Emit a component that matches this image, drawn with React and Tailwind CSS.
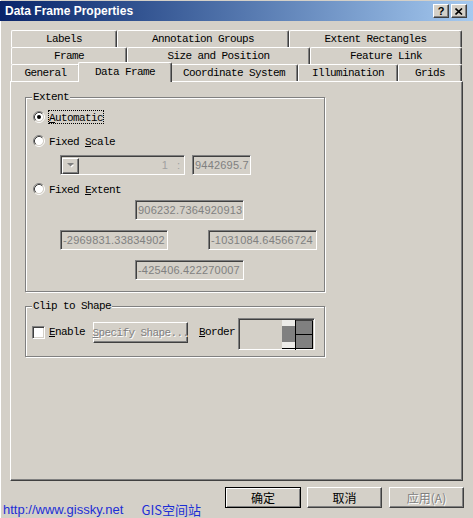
import React from "react";

const monoBase = "font-['Liberation_Mono',monospace] text-[11px] tracking-[-0.6px] leading-[14px]";
const mono = `${monoBase} text-black`;
const sans = "font-['Liberation_Sans',Arial,sans-serif]";
const cjk = "font-['Noto_Sans_CJK_SC','Liberation_Sans',sans-serif]";

const sunken =
  "border border-t-[#808080] border-l-[#808080] border-b-white border-r-white shadow-[inset_1px_1px_0_#404040,inset_-1px_-1px_0_#d4d0c8]";
const raised =
  "border border-t-white border-l-white border-b-[#404040] border-r-[#404040] shadow-[inset_-1px_-1px_0_#808080] bg-[#d4d0c8]";
const etched = "border border-[#808080] shadow-[1px_1px_0_#fff,inset_1px_1px_0_#fff]";

function TitleBar() {
  return (
    <div className="mt-[1px] h-[20px] flex items-center bg-gradient-to-r from-[#0a246a] to-[#a6caf0] pl-[5px] pr-[6px]">
      <span className={`${sans} text-[12px] font-bold text-white leading-none flex-1`}>
        Data Frame Properties
      </span>
      <div className={`${raised} w-[16px] h-[14px] flex items-center justify-center`}>
        <span className={`${sans} text-[11px] font-bold leading-none text-black`}>?</span>
      </div>
      <div className={`${raised} ml-[2px] w-[16px] h-[14px] flex items-center justify-center`}>
        <svg width="8" height="7" viewBox="0 0 8 7">
          <path d="M0.5 0.5L7 6.5M7 0.5L0.5 6.5" stroke="#000" strokeWidth="1.6" />
        </svg>
      </div>
    </div>
  );
}

function Tab({ className, children }) {
  return (
    <div
      className={`${className} h-full flex items-center justify-center rounded-t-[2px] border-t border-l border-r border-t-white border-l-white border-r-[#404040] shadow-[inset_-1px_0_0_#808080] bg-[#d4d0c8] ${mono}`}
    >
      {children}
    </div>
  );
}

function Radio({ checked }) {
  return (
    <svg width="12" height="12" viewBox="0 0 12 12" className="shrink-0">
      <circle cx="6" cy="6" r="4.2" fill="#fff" />
      <path d="M2.11 9.89A5.5 5.5 0 0 1 9.89 2.11" stroke="#808080" fill="none" />
      <path d="M9.89 2.11A5.5 5.5 0 0 1 2.11 9.89" stroke="#fff" fill="none" />
      <path d="M2.82 9.18A4.5 4.5 0 0 1 9.18 2.82" stroke="#404040" fill="none" />
      <path d="M9.18 2.82A4.5 4.5 0 0 1 2.82 9.18" stroke="#d4d0c8" fill="none" />
      {checked && <circle cx="6" cy="6" r="2" fill="#000" />}
    </svg>
  );
}

function RadioRow({ checked, focused, className, children }) {
  return (
    <div className={`${className} flex items-center h-[14px] pl-[7px]`}>
      <Radio checked={checked} />
      <span
        className={`ml-[3px] h-[14px] border border-dotted whitespace-nowrap ${focused ? "border-black" : "border-transparent"} ${mono} leading-[12px]`}
      >
        {children}
      </span>
    </div>
  );
}

function Field({ className, children }) {
  return (
    <div
      className={`${className} ${sunken} h-[20px] flex items-center pl-[2px] bg-[#d4d0c8] ${sans} text-[11px] tracking-[0.2px] text-[#808080] leading-none overflow-hidden whitespace-nowrap`}
    >
      {children}
    </div>
  );
}

function GroupLabel({ children }) {
  return (
    <span className={`absolute -top-[8px] left-[6px] px-[1px] bg-[#d4d0c8] whitespace-nowrap ${mono}`}>{children}</span>
  );
}

function BorderPicker() {
  return (
    <svg width="31" height="30" viewBox="0 0 31 30">
      <rect x="0" y="0" width="13" height="29" fill="#ecebe8" />
      <rect x="0" y="6" width="13" height="16" fill="#808080" />
      <rect x="13" y="0" width="1" height="30" fill="#000" />
      <rect x="14" y="1" width="16" height="13" fill="#808080" />
      <rect x="14" y="15" width="16" height="13" fill="#808080" />
      <rect x="14" y="14" width="17" height="1" fill="#000" />
      <rect x="0" y="28" width="31" height="1" fill="#000" />
      <rect x="30" y="0" width="1" height="29" fill="#000" />
      <rect x="14" y="0" width="17" height="1" fill="#404040" />
    </svg>
  );
}

function Panel() {
  return (
    <div className="w-[453px] h-[400px] flex flex-col pl-[14px] pt-[15px] border border-t-white border-l-white border-r-[#404040] border-b-[#404040] shadow-[inset_-1px_-1px_0_#808080] bg-[#d4d0c8]">
      {/* Extent */}
      <div className={`relative w-[300px] h-[195px] ${etched} flex flex-col`}>
        <GroupLabel>Extent</GroupLabel>
        <RadioRow checked focused className="mt-[12px]">
          <u className="underline-offset-[1px]">A</u>utomatic
        </RadioRow>
        <RadioRow className="mt-[10px]">
          Fixed <u className="underline-offset-[1px]">S</u>cale
        </RadioRow>
        <div className="mt-[7px] flex pl-[34px] h-[20px]">
          <div className={`${sunken} w-[125px] h-[20px] flex items-center pl-[1px] pt-[1px] bg-[#d4d0c8]`}>
            <div className={`${raised} w-[17px] h-[16px] flex items-center justify-center`}>
              <svg width="7" height="5" viewBox="0 0 7 5">
                <path d="M1 1H6L3.5 3.5Z" fill="#fff" transform="translate(1 1)" />
                <path d="M0 0H7L3.5 3.5Z" fill="#808080" />
              </svg>
            </div>
            <div className={`flex-1 flex justify-end gap-[9px] pr-[4px] ${sans} text-[11px] text-[#a0a0a0] leading-none`}>
              <span>1</span>
              <span>:</span>
            </div>
          </div>
          <Field className="ml-[7px] w-[59px]">9442695.7</Field>
        </div>
        <RadioRow className="mt-[7px]">
          Fixed <u className="underline-offset-[1px]">E</u>xtent
        </RadioRow>
        <div className="mt-[4px] pl-[109px]">
          <Field className="w-[109px]">906232.7364920913</Field>
        </div>
        <div className="mt-[10px] pl-[34px] flex gap-[40px]">
          <Field className="w-[108px]">-2969831.33834902</Field>
          <Field className="w-[109px]">-1031084.64566724</Field>
        </div>
        <div className="mt-[10px] pl-[109px]">
          <Field className="w-[109px]">-425406.422270007</Field>
        </div>
      </div>

      {/* Clip to Shape */}
      <div className={`relative mt-[14px] w-[300px] h-[51px] ${etched} flex items-start pl-[6px] pt-[11px]`}>
        <GroupLabel>Clip to Shape</GroupLabel>
        <div className={`${sunken} mt-[8px] w-[13px] h-[13px] bg-white shrink-0`} />
        <span className={`ml-[4px] mt-[7px] whitespace-nowrap ${mono}`}>
          <u className="underline-offset-[1px]">E</u>nable
        </span>
        <div className={`${raised} ml-[8px] mt-[4px] w-[95px] h-[21px] shrink-0 flex items-center justify-center`}>
          <span className={`whitespace-nowrap ${monoBase} text-[#808080] [text-shadow:1px_1px_0_#fff]`}>
            <u className="underline-offset-[1px]">S</u>pecify Shape...
          </span>
        </div>
        <span className={`ml-[11px] mt-[7px] whitespace-nowrap ${mono}`}>
          <u className="underline-offset-[1px]">B</u>order
        </span>
        <div className={`${sunken} ml-[3px] w-[77px] h-[32px] shrink-0 flex items-start justify-end pr-[1px] pt-[1px] bg-[#d4d0c8]`}>
          <BorderPicker />
        </div>
      </div>
    </div>
  );
}

export default function App() {
  return (
    <div className="relative w-[473px] h-[518px] overflow-hidden bg-[#d4d0c8] flex flex-col shadow-[inset_1px_0_0_#fff]">
      <TitleBar />

      <div className="mt-[9px] pl-[10px] flex flex-col">
        <div className="flex h-[17px] ml-[1px]">
          <Tab className="w-[106px]">Labels</Tab>
          <Tab className="w-[172px]">Annotation Groups</Tab>
          <Tab className="w-[173px]">Extent Rectangles</Tab>
        </div>
        <div className="flex h-[17px] ml-[1px]">
          <Tab className="w-[116px]">Frame</Tab>
          <Tab className="w-[183px]">Size and Position</Tab>
          <Tab className="w-[152px]">Feature Link</Tab>
        </div>
        <div className="flex items-end h-[17px] ml-[1px]">
          <Tab className="w-[69px]">General</Tab>
          <div
            className={`relative z-10 -mx-[2px] mb-[-1px] w-[94px] h-[20px] shrink-0 flex items-center justify-center pb-[2px] rounded-t-[2px] border-t border-l border-r border-t-white border-l-white border-r-[#404040] shadow-[inset_-1px_0_0_#808080] bg-[#d4d0c8] ${mono}`}
          >
            Data Frame
          </div>
          <Tab className="w-[128px]">Coordinate System</Tab>
          <Tab className="w-[100px]">Illumination</Tab>
          <Tab className="w-[64px]">Grids</Tab>
        </div>
        <Panel />
      </div>

      <div className="mt-[6px] flex justify-end pr-[9px]">
        <div
          className={`w-[76px] h-[21px] border border-black shadow-[inset_1px_1px_0_#fff,inset_-1px_-1px_0_#808080] flex items-center justify-center ${cjk} text-[12px] leading-none text-black`}
        >
          确定
        </div>
        <div
          className={`${raised} ml-[6px] w-[75px] h-[21px] flex items-center justify-center ${cjk} text-[12px] leading-none text-black`}
        >
          取消
        </div>
        <div
          className={`${raised} ml-[7px] w-[75px] h-[21px] flex items-center justify-center ${cjk} text-[12px] leading-none text-[#808080] [text-shadow:1px_1px_0_#fff]`}
        >
          应用(A)
        </div>
      </div>

      {/* site credit line laid over the window's lower edge */}
      <div className={`absolute left-[3px] top-[502px] flex gap-[18px] ${sans} text-[13px] leading-[16px] text-[#1c2ed6]`}>
        <span>http://www.gissky.net</span>
        <span className={cjk}>GIS空间站</span>
      </div>
    </div>
  );
}
